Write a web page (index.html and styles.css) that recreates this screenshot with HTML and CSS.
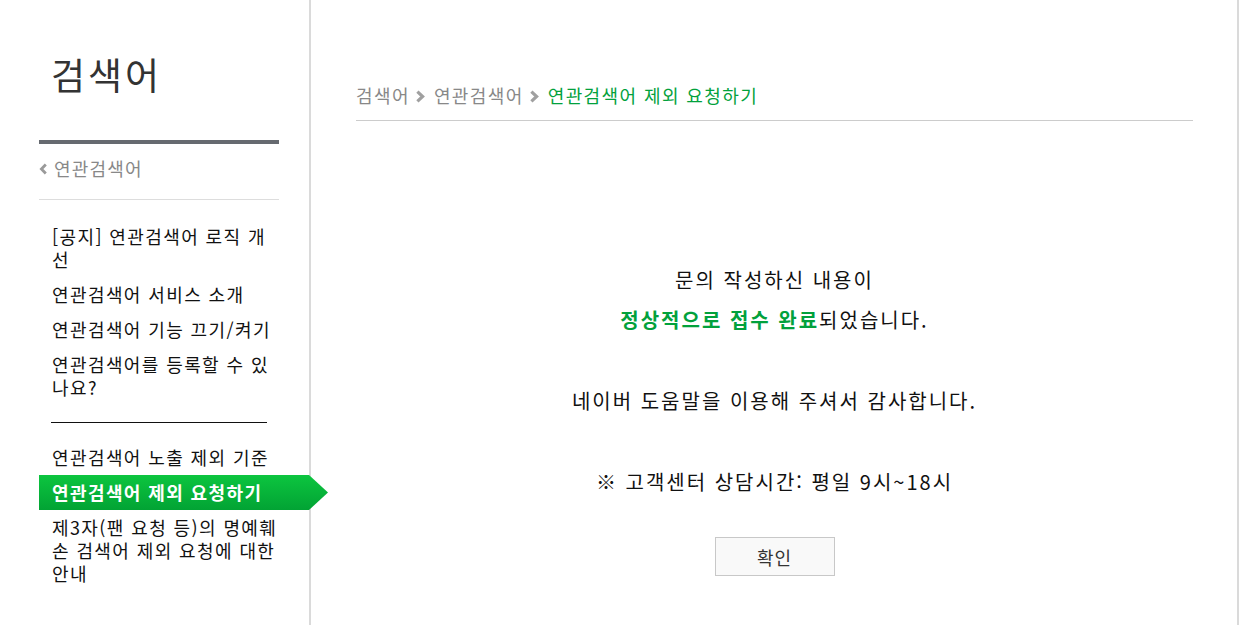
FILE: index.html
```html
<!DOCTYPE html>
<html lang="ko">
<head>
<meta charset="utf-8">
<title>연관검색어 제외 요청하기</title>
<link rel="stylesheet" href="styles.css">
</head>
<body>
<div class="page">
  <aside class="sidebar">
    <div class="side-inner">
      <h1 class="side-title">검색어</h1>
      <div class="side-bar"></div>
      <div class="back-row">
        <a class="back" href="#"><svg class="back-icon" width="9" height="12" viewBox="0 0 9 12"><path d="M6.8 1.5 L2.4 6 L6.8 10.5" stroke="#9a9a9a" stroke-width="2.8" fill="none"/></svg>연관검색어</a>
      </div>
      <ul class="menu menu-top">
        <li>[공지] 연관검색어 로직 개선</li>
        <li>연관검색어 서비스 소개</li>
        <li>연관검색어 기능 끄기/켜기</li>
        <li>연관검색어를 등록할 수 있나요?</li>
      </ul>
      <div class="menu-divider"></div>
      <ul class="menu">
        <li>연관검색어 노출 제외 기준</li>
        <li class="active">연관검색어 제외 요청하기</li>
        <li>제3자(팬 요청 등)의 명예훼손 검색어 제외 요청에 대한 안내</li>
      </ul>
    </div>
  </aside>
  <main class="main">
    <nav class="crumbs">
      <span>검색어</span>
      <svg class="crumb-sep" width="11" height="13" viewBox="0 0 11 13"><path d="M2.4 1.6 L7.6 6.5 L2.4 11.4" stroke="#a0a0a0" stroke-width="3.2" fill="none"/></svg>
      <span>연관검색어</span>
      <svg class="crumb-sep" width="11" height="13" viewBox="0 0 11 13"><path d="M2.4 1.6 L7.6 6.5 L2.4 11.4" stroke="#a0a0a0" stroke-width="3.2" fill="none"/></svg>
      <span class="crumb-current">연관검색어 제외 요청하기</span>
    </nav>
    <section class="result">
      <p>문의 작성하신 내용이<br><strong>정상적으로 접수 완료</strong>되었습니다.</p>
      <p>네이버 도움말을 이용해 주셔서 감사합니다.</p>
      <p>※ 고객센터 상담시간: 평일 9시~18시</p>
      <button class="ok-btn" type="button">확인</button>
    </section>
  </main>
</div>
</body>
</html>
```
FILE: styles.css
```css
html, body {
  margin: 0;
  padding: 0;
  background: #fff;
}
body {
  font-family: "Noto Sans CJK KR", "Noto Sans", sans-serif;
  color: #111;
  overflow: hidden;
}
.page {
  display: flex;
  min-height: 625px;
  width: 1239px;
}
.sidebar {
  flex: none;
  width: 309px;
  border-right: 2px solid #dadada;
}
.side-inner {
  margin-left: 39px;
  width: 240px;
}
.side-title {
  margin: 0;
  padding: 54px 0 0 12px;
  font-size: 37px;
  line-height: 40px;
  font-weight: normal;
  letter-spacing: 3px;
  color: #333;
}
.side-bar {
  height: 4px;
  background: #666a70;
  margin-top: 46px;
}
.back-row {
  margin-top: 13px;
  padding-bottom: 19px;
  border-bottom: 1px solid #dddddd;
}
.back {
  display: flex;
  align-items: center;
  font-size: 18px;
  line-height: 23px;
  letter-spacing: 1.2px;
  color: #888;
  text-decoration: none;
}
.back-icon {
  margin: 0 6px 0 0;
}
.menu {
  list-style: none;
  margin: 0 -3px 0 0;
  padding: 0;
}
.menu-top {
  margin-top: 19px;
}
.menu li {
  padding: 6px 0 6px 13px;
  font-size: 18px;
  line-height: 23px;
  letter-spacing: 1.4px;
  color: #111;
}
.menu li.active {
  margin-right: -46px;
  color: #fff;
  font-weight: bold;
  background: linear-gradient(#0cc53f, #02a334);
  clip-path: polygon(0 0, calc(100% - 19px) 0, 100% 50%, calc(100% - 19px) 100%, 0 100%);
}
.menu-divider {
  height: 1px;
  background: #111;
  margin: 17px 12px;
}
.main {
  flex: 1;
  border-right: 2px solid #dadada;
  padding: 0 44px 0 45px;
}
.crumbs {
  display: flex;
  align-items: center;
  padding-top: 84px;
  padding-bottom: 13px;
  border-bottom: 1px solid #cccccc;
  font-size: 18px;
  line-height: 23px;
  letter-spacing: 1.4px;
  color: #888;
}
.crumb-sep {
  margin: 1px 8px 0 5px;
}
.crumb-current {
  color: #02a13c;
}
.result {
  padding-top: 139px;
  text-align: center;
}
.result p {
  margin: 0;
  font-size: 20px;
  line-height: 40px;
  letter-spacing: 2px;
  color: #111;
}
.result p + p {
  margin-top: 41px;
}
.result strong {
  color: #02a13c;
}
.ok-btn {
  margin-top: 35px;
  width: 120px;
  height: 39px;
  border: 1px solid #c8c8c8;
  background: #f9f9f9;
  font-family: "Noto Sans CJK KR", sans-serif;
  font-size: 18px;
  letter-spacing: 1px;
  color: #333;
  padding: 0;
}
```
